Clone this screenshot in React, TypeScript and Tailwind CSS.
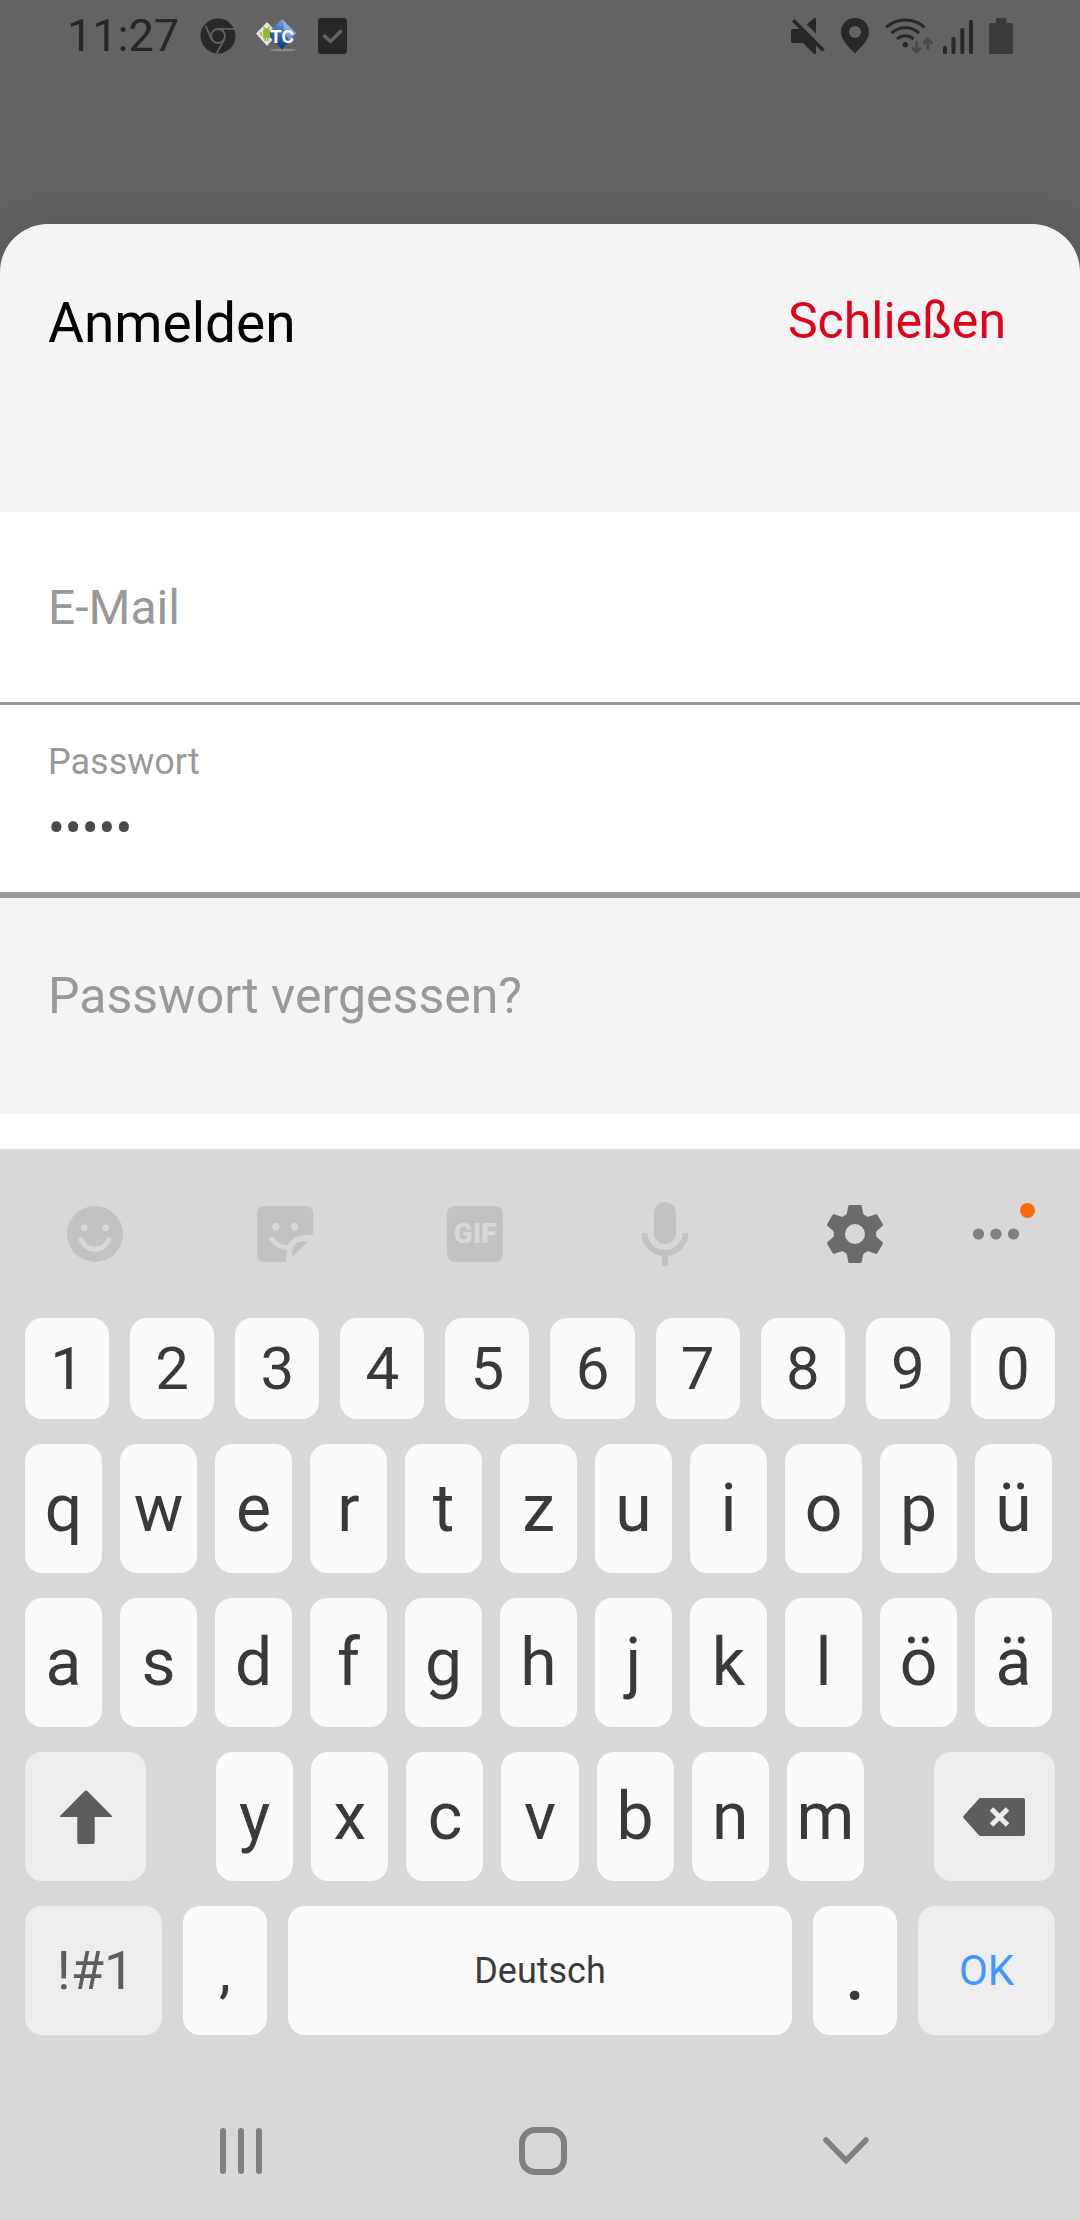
import type { ReactNode } from "react";

const BG = "#d8d8d8";

function ChromeIcon() {
  return (
    <svg width="36" height="36" viewBox="-18 -18 36 36" aria-hidden="true">
      <circle r="17.5" fill="#282828" />
      <circle r="7" fill="none" stroke="#636363" strokeWidth="1.8" />
      <path d="M0 -7.2H16.5M-12.6 -10.5L-6.2 3.6M6.2 3.6L-1.4 17.4" fill="none" stroke="#636363" strokeWidth="1.8" />
    </svg>
  );
}

function TcIcon() {
  return (
    <svg width="42" height="34" viewBox="0 0 42 34" aria-hidden="true">
      <defs>
        <linearGradient id="tcBlue" x1="0.7" y1="0" x2="0.4" y2="1">
          <stop offset="0" stopColor="#86a9e0" />
          <stop offset="0.5" stopColor="#3a6cb4" />
          <stop offset="1" stopColor="#07365f" />
        </linearGradient>
      </defs>
      <ellipse cx="27" cy="31" rx="13" ry="1.5" fill="#8a8a8a" />
      <path d="M0 14.5L11 3L22 14.5L11 27Z" fill="#e3e3e3" />
      <path d="M26 0L41 14.5L26 30.5L11 15Z" fill="url(#tcBlue)" />
      <path d="M27 1L40 14.5L33 21Q27 14 27 1Z" fill="#a9c0ea" opacity="0.6" />
      <path d="M5 13V18M7 12.5Q7 9 10.500 9T14 12.5V19H12.500V22H11V19H10V22H8.500V19H7Z" fill="#93b929" />
      <path d="M5 13V17M7.500 7.500L8.500 9.500M13.500 7.500L12.500 9.500" stroke="#93b929" strokeWidth="1.4" />
      <text x="14" y="24" fontFamily="Roboto, sans-serif" fontSize="19" fontWeight="700" fill="#ffffff">TC</text>
    </svg>
  );
}

function CheckIcon() {
  return (
    <svg width="29" height="36" viewBox="0 0 29 36" aria-hidden="true">
      <rect width="29" height="36" rx="3" fill="#282828" />
      <path d="M5.500 17L12.500 23.500L23.500 12.500" fill="none" stroke="#636363" strokeWidth="3.4" />
    </svg>
  );
}

function MuteIcon() {
  return (
    <svg width="34" height="36" viewBox="0 0 34 36" fill="#282828" aria-hidden="true">
      <path d="M15.700 6.700L22.300 .8Q23 0 24 0H25V15.500Z" />
      <path d="M0 13Q0 11 2 11H9L25 27V36H24Q23 36 22.300 35.300L12 25H2Q0 25 0 23Z" />
      <path d="M2.200 2.200L32.500 32.500" stroke="#282828" strokeWidth="3.600" />
    </svg>
  );
}

function PinIcon() {
  return (
    <svg width="28" height="36" viewBox="0 0 28 36" aria-hidden="true">
      <path
        fillRule="evenodd"
        fill="#282828"
        d="M14 0C6 0 0 6 0 14C0 23 9 29.500 14 35.500C19 29.500 28 23 28 14C28 6 22 0 14 0ZM14 8A6 6 0 1 1 14 20A6 6 0 1 1 14 8Z"
      />
    </svg>
  );
}

function WifiIcon() {
  return (
    <svg width="48" height="36" viewBox="0 0 48 36" fill="none" aria-hidden="true">
      <g stroke="#282828" strokeWidth="3">
        <path d="M1 9.300A29 29 0 0 1 39.600 9.300" />
        <path d="M6.600 15.200A20 20 0 0 1 34 15.200" />
        <path d="M12 21A12 12 0 0 1 28.600 21" />
      </g>
      <circle cx="20.300" cy="26.700" r="2.700" fill="#282828" />
      <g stroke="#4a4a4a" strokeWidth="3">
        <path d="M31.500 23V34M27 29.500L31.500 34L36 29.500" />
        <path d="M42.700 32V21M38.200 25.500L42.700 21L47.200 25.500" />
      </g>
    </svg>
  );
}

function SignalIcon() {
  return (
    <svg width="30" height="36" viewBox="0 0 30 36" fill="#282828" aria-hidden="true">
      <rect x="0" y="28" width="4" height="8" rx="1.500" />
      <rect x="8.500" y="19" width="4" height="17" rx="1.500" />
      <rect x="17.300" y="10" width="4" height="26" rx="1.500" />
      <rect x="26" y="2" width="4" height="34" rx="1.500" />
    </svg>
  );
}

function BatteryIcon() {
  return (
    <svg width="24" height="36" viewBox="0 0 24 36" fill="#3b3b3b" aria-hidden="true">
      <rect y="5" width="24" height="31" rx="1.500" />
      <rect x="7" width="10.500" height="7" rx="1" />
    </svg>
  );
}

function SmileIcon() {
  return (
    <svg width="56" height="56" viewBox="-28 -28 56 56" aria-hidden="true">
      <circle r="28" fill="#c2c2c2" />
      <circle cx="-10.700" cy="-6.300" r="3.500" fill={BG} />
      <circle cx="10.700" cy="-6.300" r="3.500" fill={BG} />
      <path d="M-14 5.500C-8.500 18.500 8.500 18.500 14 5.500" fill="none" stroke={BG} strokeWidth="5" strokeLinecap="round" />
    </svg>
  );
}

function StickerIcon() {
  return (
    <svg width="56" height="56" viewBox="-28 -28 56 56" aria-hidden="true">
      <path
        d="M-20 -28H20Q28 -28 28 -20V.7L18 1.300Q8 2.500 3.400 10L2 15L.7 28H-20Q-28 28 -28 20V-20Q-28 -28 -20 -28Z"
        fill="#c2c2c2"
      />
      <path d="M7 23.300L7.600 16Q9 8.500 16.500 7.300H23Z" fill="#c2c2c2" />
      <circle cx="-9.200" cy="-7.300" r="3.700" fill={BG} />
      <circle cx="9.700" cy="-7.300" r="3.700" fill={BG} />
      <path d="M-13 5Q-7.500 13.500 2 13.500" fill="none" stroke={BG} strokeWidth="5" strokeLinecap="round" />
    </svg>
  );
}

function MicIcon() {
  return (
    <svg width="48" height="66" viewBox="0 0 48 66" aria-hidden="true">
      <rect x="13" y="1" width="22" height="42" rx="11" fill="#c2c2c2" />
      <path d="M3.500 32C3.500 44 13 52 24 52S44.500 44 44.500 32M24 51V65" fill="none" stroke="#c2c2c2" strokeWidth="6" />
    </svg>
  );
}

function GearIcon() {
  return (
    <svg width="58" height="58" viewBox="-29 -29 58 58" aria-hidden="true">
      <circle r="15.500" fill="none" stroke="#6b6b6b" strokeWidth="11" />
      {[0, 60, 120, 180, 240, 300].map((angle) => (
        <path
          key={angle}
          transform={`rotate(${angle})`}
          fill="#6b6b6b"
          d="M-6.800 -27.800Q-6.500 -29 -5.300 -29H5.300Q6.500 -29 6.800 -27.800L8 -21Q8.700 -18.500 10.700 -18.300L6 -14H-6L-10.700 -18.300Q-8.700 -18.500 -8 -21Z"
        />
      ))}
    </svg>
  );
}

function MoreIcon() {
  return (
    <svg width="78" height="66" viewBox="0 0 78 66" fill="#808080" aria-hidden="true">
      <circle cx="21.500" cy="33" r="5.600" />
      <circle cx="39" cy="33" r="5.600" />
      <circle cx="56.500" cy="33" r="5.600" />
      <circle cx="70.500" cy="9.500" r="7.500" fill="#f76b0c" />
    </svg>
  );
}

function ToolButton({ label, children }: { label: string; children: ReactNode }) {
  return (
    <button type="button" aria-label={label} className="flex flex-[190] items-center justify-center">
      {children}
    </button>
  );
}

function LetterKey({ children }: { children: string }) {
  return (
    <button
      type="button"
      className="h-[129px] min-w-0 flex-1 rounded-[17px] bg-[#fafafa] text-center text-[66px] leading-none text-[#3a3a3a]"
    >
      {children}
    </button>
  );
}

function LetterRow({ letters }: { letters: string }) {
  return (
    <div className="flex gap-[18px] pr-[3px]">
      {letters.split("").map((letter) => (
        <LetterKey key={letter}>{letter}</LetterKey>
      ))}
    </div>
  );
}

export default function App() {
  return (
    <div className="flex min-h-screen flex-col bg-[#636363] font-[Roboto,sans-serif]">
      <header className="flex h-[72px] items-center justify-between px-[67px]">
        <div className="flex items-center">
          <span className="mr-[21px] text-[45px] leading-[72px] text-[#262626]">11:27</span>
          <div className="flex items-center gap-5">
            <ChromeIcon />
            <TcIcon />
            <CheckIcon />
          </div>
        </div>
        <div className="flex items-center gap-4">
          <MuteIcon />
          <PinIcon />
          <div className="flex gap-[10px]">
            <WifiIcon />
            <SignalIcon />
          </div>
          <BatteryIcon />
        </div>
      </header>

      <main className="mt-[152px] flex flex-1 flex-col overflow-clip rounded-t-[48px] bg-[#f4f4f4] shadow-[0_0_48px_rgba(0,0,0,0.14)]">
        <div className="flex items-start justify-between pt-[69px] pr-[74px] pb-[159px] pl-12">
          <h1 className="text-[55px] leading-[60px] text-black">Anmelden</h1>
          <button type="button" className="text-[50px] leading-[56px] text-[#e2001a]">
            Schließen
          </button>
        </div>

        <form className="flex flex-col">
          <div className="border-b-[3px] border-[#999999] bg-white">
            <input
              type="email"
              aria-label="E-Mail"
              placeholder="E-Mail"
              className="block h-[190px] w-full px-12 text-[48px] text-[#4a4a4c] outline-none placeholder:text-[#999999]"
            />
          </div>
          <div className="border-b-[6px] border-[#999999] bg-white px-12 pt-[35px] pb-8">
            <label htmlFor="password" className="block text-[36px] leading-[44px] text-[#999999]">
              Passwort
            </label>
            <input
              id="password"
              type="password"
              defaultValue="12345"
              className="mt-3 block h-16 w-full text-[50px] text-[#4a4a4c] outline-none"
            />
          </div>
        </form>

        <div className="px-12 pt-[68px] pb-[88px]">
          <a href="#reset" className="block text-[50px] leading-[60px] text-[#999999]">
            Passwort vergessen?
          </a>
        </div>

        <div className="h-[35px] bg-white" />

        <section aria-label="Tastatur" className="flex-1 bg-[#d8d8d8]">
          <div className="flex h-[169px] pr-[38px]">
            <ToolButton label="Emoji">
              <SmileIcon />
            </ToolButton>
            <ToolButton label="Sticker">
              <StickerIcon />
            </ToolButton>
            <ToolButton label="Bilder">
              <span className="flex h-14 w-14 items-center justify-center rounded-lg bg-[#c2c2c2] text-[28px] font-black text-[#d8d8d8]">
                GIF
              </span>
            </ToolButton>
            <ToolButton label="Spracheingabe">
              <MicIcon />
            </ToolButton>
            <ToolButton label="Einstellungen">
              <GearIcon />
            </ToolButton>
            <button type="button" aria-label="Mehr" className="flex flex-[92] items-center justify-center">
              <MoreIcon />
            </button>
          </div>

          <div className="flex flex-col gap-[25px] px-[25px]">
            <div className="grid grid-cols-10 gap-[21px]">
              {"1234567890".split("").map((digit) => (
                <button
                  key={digit}
                  type="button"
                  className="h-[101px] rounded-[17px] bg-[#fafafa] text-[60px] leading-none text-[#3a3a3a]"
                >
                  {digit}
                </button>
              ))}
            </div>
            <LetterRow letters="qwertzuiopü" />
            <LetterRow letters="asdfghjklöä" />
            <div className="flex gap-[70px]">
              <button
                type="button"
                aria-label="Umschalten"
                className="flex h-[129px] flex-[121] items-center justify-center rounded-[17px] bg-[#ededed]"
              >
                <svg width="52" height="54" viewBox="0 0 52 54" fill="#5d5d5d" aria-hidden="true">
                  <path d="M25 .8Q26 0 27 .8L52 26V27H34.700V52Q34.700 54 33 54H19Q17.300 54 17.300 52V27H0V26Z" />
                </svg>
              </button>
              <div className="flex flex-[647] gap-[18px]">
                {"yxcvbnm".split("").map((letter) => (
                  <LetterKey key={letter}>{letter}</LetterKey>
                ))}
              </div>
              <button
                type="button"
                aria-label="Löschen"
                className="flex h-[129px] flex-[121] items-center justify-center rounded-[17px] bg-[#ededed]"
              >
                <svg width="62" height="38" viewBox="0 0 62 38" aria-hidden="true">
                  <path d="M18 0H60Q62 0 62 2V36Q62 38 60 38H18Q16.500 38 15.500 36.800L.7 20.300Q-.3 19 .7 17.700L15.500 1.200Q16.500 0 18 0Z" fill="#5d5d5d" />
                  <path d="M28.500 11L44.500 27M44.500 11L28.500 27" stroke="#ededed" strokeWidth="5" />
                </svg>
              </button>
            </div>
            <div className="grid grid-cols-[137fr_84fr_504fr_84fr_137fr] gap-[21px]">
              <button type="button" className="h-[129px] rounded-[17px] bg-[#ededed] pl-1 text-[54px] text-[#5d5d5d]">
                !#1
              </button>
              <button type="button" className="h-[129px] rounded-[17px] bg-[#fafafa] text-[60px] text-[#3a3a3a]">
                ,
              </button>
              <button type="button" className="h-[129px] rounded-[17px] bg-[#fafafa] text-[36px] text-[#3a3a3a]">
                Deutsch
              </button>
              <button
                type="button"
                className="h-[129px] rounded-[17px] bg-[#fafafa] text-[86px] leading-[129px] text-[#3a3a3a]"
              >
                .
              </button>
              <button type="button" className="h-[129px] rounded-[17px] bg-[#ededed] text-[42px] text-[#4297ff]">
                OK
              </button>
            </div>
          </div>

          <nav aria-label="System" className="mt-[47px] flex h-[138px] pr-[83px] pl-[90px]">
            <button type="button" aria-label="Letzte Apps" className="flex flex-1 items-center justify-center">
              <svg width="42" height="46" viewBox="0 0 42 46" fill="#808080" aria-hidden="true">
                <rect width="6" height="46" rx="3" />
                <rect x="18" width="6" height="46" rx="3" />
                <rect x="36" width="6" height="46" rx="3" />
              </svg>
            </button>
            <button type="button" aria-label="Startseite" className="flex flex-1 items-center justify-center">
              <svg width="48" height="48" viewBox="0 0 48 48" aria-hidden="true">
                <rect x="3" y="3" width="42" height="42" rx="13" fill="none" stroke="#808080" strokeWidth="6" />
              </svg>
            </button>
            <button type="button" aria-label="Tastatur schließen" className="flex flex-1 items-center justify-center">
              <svg width="46" height="28" viewBox="0 0 46 28" aria-hidden="true">
                <path d="M3 3L23 23.500L43 3" fill="none" stroke="#808080" strokeWidth="5.500" strokeLinecap="round" />
              </svg>
            </button>
          </nav>
        </section>
      </main>
    </div>
  );
}
